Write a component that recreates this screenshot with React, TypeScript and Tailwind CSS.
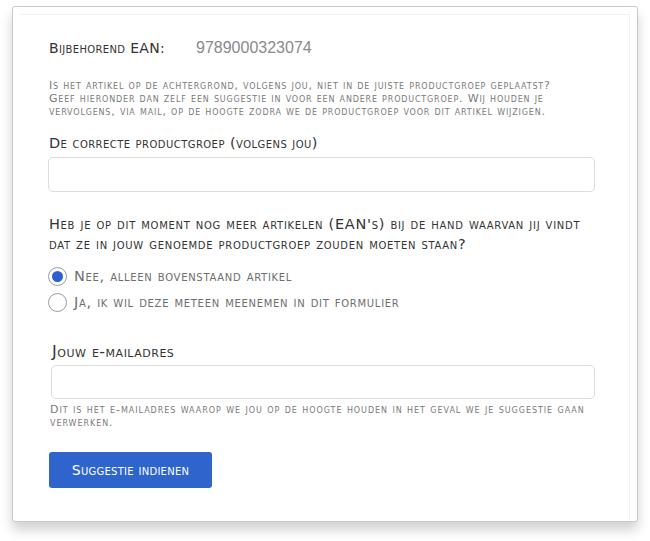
import React from 'react';

const sc = "[font-variant-caps:small-caps] font-['DejaVu_Sans',sans-serif]";

export default function App() {
  return (
    <div className="min-h-[541px] bg-white pt-[6px] pl-[12px] font-['Liberation_Sans',sans-serif]">
      <div className="w-[626px] h-[516px] rounded-[3px] border border-[#c9c9c6] bg-white shadow-[0_8px_12px_rgba(0,0,0,0.18)] pt-[7px] px-[7px]">
        <div className="h-full border-t border-r border-[#f1f1f1] pl-[29px] pr-[26px] pt-[21px]">
          <div className="flex items-center text-[#333]">
            <span className={`w-[147px] text-[14px] tracking-[0.35px] ${sc}`}>Bijbehorend EAN:</span>
            <span className="text-[16px] text-[#8a8a8a]">9789000323074</span>
          </div>

          <p className={`mt-[19px] whitespace-nowrap text-[11px] tracking-[0.82px] leading-[13px] text-[#7a7a7a] ${sc}`}>
            Is het artikel op de achtergrond, volgens jou, niet in de juiste productgroep geplaatst?
            <br />
            Geef hieronder dan zelf een suggestie in voor een andere productgroep. Wij houden je
            <br />
            vervolgens, via mail, op de hoogte zodra we de productgroep voor dit artikel wijzigen.
          </p>

          <label className={`block mt-[16px] text-[14.5px] tracking-[0.45px] leading-[18px] text-[#333] ${sc}`}>
            De correcte productgroep (volgens jou)
          </label>
          <input className="mt-[5px] -ml-[1px] block w-[547px] h-[35px] rounded-[5px] border border-[#dcdcdc] bg-white outline-none" />

          <p className={`mt-[22px] whitespace-nowrap text-[14.5px] tracking-[0.7px] leading-[20px] text-[#333] ${sc}`}>
            Heb je op dit moment nog meer artikelen (EAN's) bij de hand waarvan jij vindt
            <br />
            dat ze in jouw genoemde productgroep zouden moeten staan?
          </p>

          <div className="mt-[13px] -ml-[1px] flex flex-col gap-[7px]">
            <label className={`flex items-center gap-[7px] text-[14.5px] tracking-[0.7px] leading-[19px] text-[#6e6e6e] ${sc}`}>
              <span className="w-[19px] h-[19px] shrink-0 rounded-full border border-[#9a9a9a] bg-white flex items-center justify-center">
                <span className="w-[11px] h-[11px] rounded-full bg-[#2d5fcf]" />
              </span>
              Nee, alleen bovenstaand artikel
            </label>
            <label className={`flex items-center gap-[7px] text-[14.5px] tracking-[0.7px] leading-[19px] text-[#6e6e6e] ${sc}`}>
              <span className="w-[19px] h-[19px] shrink-0 rounded-full border border-[#9a9a9a] bg-white" />
              Ja, ik wil deze meteen meenemen in dit formulier
            </label>
          </div>

          <label className={`block mt-[31px] pl-[3px] text-[16px] tracking-[0.5px] leading-[18px] text-[#333] ${sc}`}>
            Jouw e-mailadres
          </label>
          <input className="mt-[4px] ml-[2px] block w-[544px] h-[34px] rounded-[5px] border border-[#dcdcdc] bg-white outline-none" />
          <p className={`mt-[4px] pl-[1px] whitespace-nowrap text-[11px] tracking-[0.95px] leading-[13px] text-[#7a7a7a] ${sc}`}>
            Dit is het e-mailadres waarop we jou op de hoogte houden in het geval we je suggestie gaan
            <br />
            verwerken.
          </p>

          <button className={`mt-[23px] w-[163px] h-[36px] rounded-[3px] bg-[#2f64cc] text-white text-[14px] tracking-[0.25px] ${sc}`}>
            Suggestie indienen
          </button>
        </div>
      </div>
    </div>
  );
}
